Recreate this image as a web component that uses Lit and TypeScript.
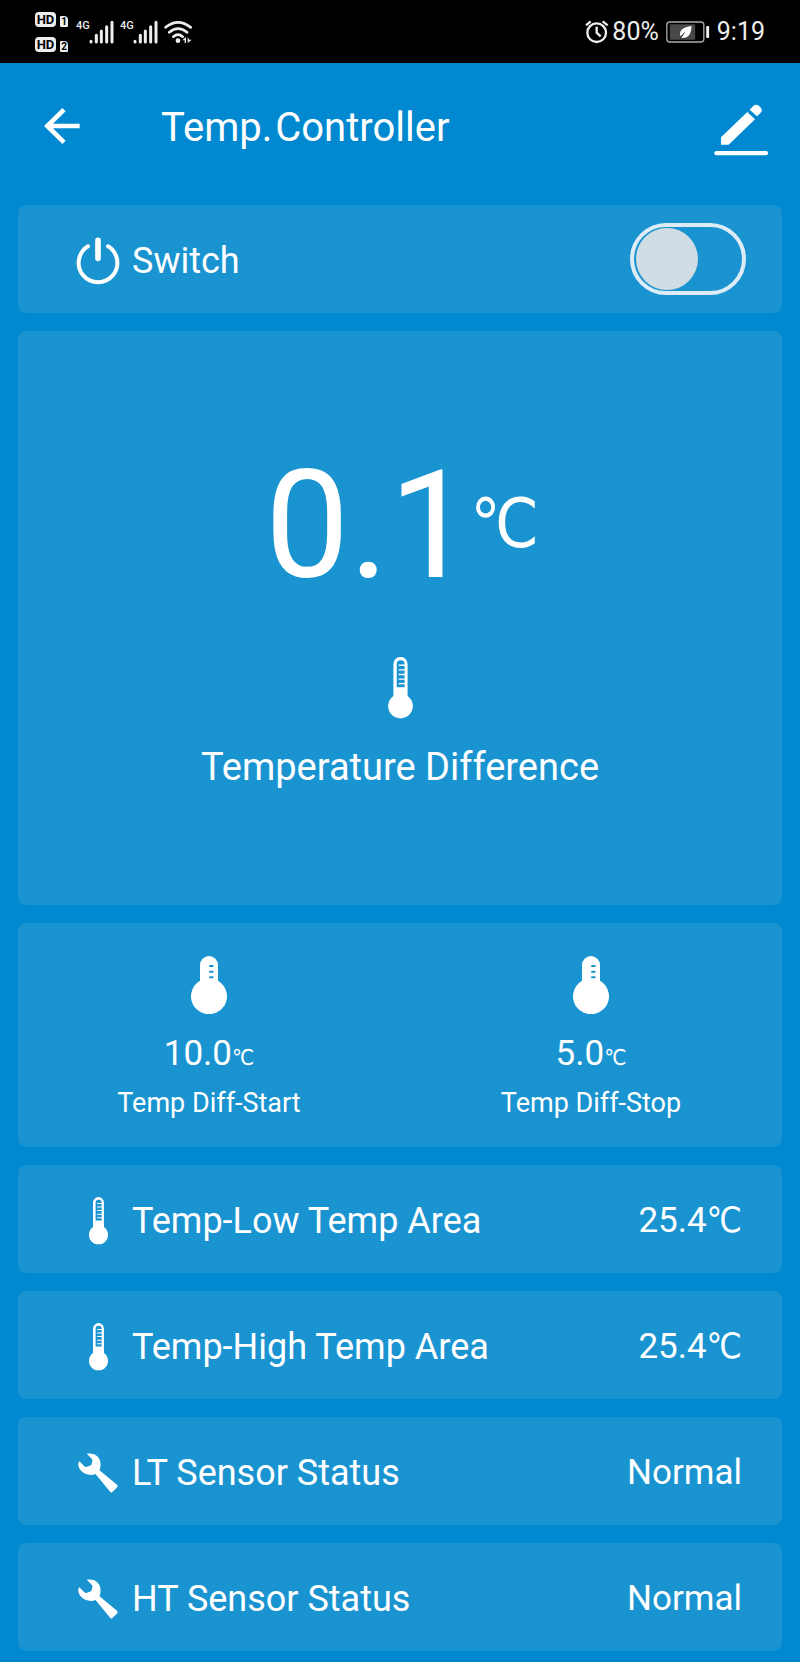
import { LitElement, html, css } from "lit";
import { customElement, property, state } from "lit/decorators.js";

const slimThermometer = html`<svg class="slim" viewBox="595 51 75 188" aria-hidden="true">
  <path fill="currentColor" fill-rule="evenodd" d="M611 72a21.500 21.500 0 0 1 43 0v97a37.500 37.500 0 1 1-43 0zM621 143h24V73a12 12 0 0 0-24 0z"/>
  <path stroke="currentColor" stroke-width="4" d="M627 76h20M627 90h20M627 104h20M627 118h20M627 132h20"/>
</svg>`;

const roundThermometer = html`<svg class="round" viewBox="275 48 108 174" aria-hidden="true">
  <path fill="currentColor" d="M302 75a27 27 0 0 1 54 0v47a54 54 0 1 1-54 0z"/>
  <path class="ticks" stroke-width="6" stroke-linecap="round" d="M332 78h8M332 95h8M332 112h8"/>
</svg>`;

const wrench = html`<svg class="wrench" viewBox="236 126 119 118" aria-hidden="true">
  <path fill="currentColor" d="M262 128C286 123 304 139 303 160Q303 170 300 177L352 220Q356 224 352 228L339 241Q335 245 331 240L288 188C262 198 234 178 237 155L240 150L255 165Q259 168 265 166L273 163Q277 161 277 156L279 149Q279 145 276 142Z"/>
</svg>`;

const power = html`<svg class="power" viewBox="230 528 130 144" aria-hidden="true">
  <g fill="none" stroke="currentColor" stroke-linecap="round">
    <path stroke-width="12" d="M265 556A58 58 0 1 0 325 556"/>
    <path stroke-width="17" d="M295 538V592"/>
  </g>
</svg>`;

const icons = { thermometer: slimThermometer, wrench };

@customElement("status-bar")
export class StatusBar extends LitElement {
  static styles = css`
    :host {
      display: flex;
      justify-content: space-between;
      align-items: center;
      height: 63px;
      box-sizing: border-box;
      padding: 1px 35px 0 35px;
      background: #000;
      color: #eee;
      font-size: 25px;
      line-height: 28px;
    }
    svg { display: block; flex: none; }
    .left, .right { display: flex; align-items: center; }
    .lines { display: grid; gap: 10px; margin-right: 8px; }
    .hd { display: flex; gap: 4px; align-items: flex-end; }
    .badge, .sim {
      background: #eee;
      color: #000;
      font-weight: 700;
      text-align: center;
    }
    .badge { width: 21px; height: 15px; border-radius: 4px; font-size: 13px; line-height: 15px; }
    .sim { width: 8px; height: 11px; border-radius: 1px 4px 1px 1px; font-size: 10px; line-height: 11px; }
    .cell { display: flex; align-items: flex-start; width: 38px; margin-right: 6px; }
    .net { width: 13px; font-size: 11px; line-height: 12px; font-weight: 500; }
    .bars { width: 25px; height: 24px; }
    .wifi { width: 29px; height: 24px; }
    .alarm { width: 24px; height: 24px; margin-right: 3px; }
    .battery { width: 44px; height: 22px; margin: 0 7px; }
  `;

  private cell() {
    return html`<div class="cell">
      <span class="net">4G</span>
      <svg class="bars" viewBox="205 57 75 72" aria-hidden="true">
        <path stroke="currentColor" stroke-width="9" stroke-linecap="round" d="M211 121v2M227 103v20M242 90v33M258 77v46M274 64v59"/>
      </svg>
    </div>`;
  }

  render() {
    return html`
      <div class="left">
        <div class="lines">
          <div class="hd"><span class="badge">HD</span><span class="sim">1</span></div>
          <div class="hd"><span class="badge">HD</span><span class="sim">2</span></div>
        </div>
        ${this.cell()}${this.cell()}
        <svg class="wifi" viewBox="433 57 87 72" aria-hidden="true">
          <g fill="none" stroke="currentColor" stroke-width="8" stroke-linecap="round">
            <path d="M438 79Q475 49 513 79M449 94Q475 72 502 94M461 107Q475 95 489 107"/>
          </g>
          <circle cx="475" cy="119" r="7" fill="currentColor"/>
          <path fill="currentColor" d="M488 118l11-10v18h-4v-8zM504 108v18l12-10h-7z"/>
        </svg>
      </div>
      <div class="right">
        <svg class="alarm" viewBox="50 58 72 72" aria-hidden="true">
          <g fill="none" stroke="currentColor" stroke-width="7">
            <circle cx="85" cy="96" r="28"/>
            <path d="M53 74l14-12M103 62l15 12M85 78v18l12 11"/>
          </g>
        </svg>
        <span>80%</span>
        <svg class="battery" viewBox="291 62 131 66" aria-hidden="true">
          <rect x="293" y="65" width="111" height="60" rx="9" fill="none" stroke="#aaa" stroke-width="4"/>
          <rect x="302" y="72" width="76" height="46" rx="2" fill="#484848"/>
          <rect x="411" y="77" width="9" height="36" rx="3" fill="currentColor"/>
          <path fill="#fff" d="M367 77C342 80 328 90 334 108L350 92L337 113C357 115 367 100 367 77Z"/>
        </svg>
        <span>9:19</span>
      </div>`;
  }
}

@customElement("info-row")
export class InfoRow extends LitElement {
  static styles = css`
    :host {
      display: flex;
      align-items: center;
      gap: 12px;
      box-sizing: border-box;
      min-height: 108px;
      padding: 3px 40px 0 58px;
      border-radius: 8px;
      background: var(--card);
      font-size: 36px;
      line-height: 42px;
    }
    .icon { display: grid; place-items: center; width: 44px; flex: none; }
    .name { flex: 1; }
    .value { font-size: 35px; }
    svg { display: block; }
    .slim { width: 19px; height: 48px; }
    .wrench { width: 40px; height: 40px; }
  `;

  @property() icon: keyof typeof icons = "thermometer";
  @property() name = "";
  @property() value = "";

  render() {
    return html`
      <span class="icon">${icons[this.icon]}</span>
      <span class="name">${this.name}</span>
      <span class="value">${this.value}</span>`;
  }
}

@customElement("app-root")
export class AppRoot extends LitElement {
  static styles = css`
    :host {
      --page: #0089d0;
      --card: #1a94d1;
      display: block;
      box-sizing: border-box;
      min-height: 100vh;
      background: var(--page);
      color: #fff;
      font-family: Roboto, "DejaVu Sans Condensed", sans-serif;
    }
    svg { display: block; }
    header {
      display: flex;
      align-items: center;
      height: 130px;
      padding: 0 32px 0 44px;
    }
    button {
      flex: none;
      padding: 0;
      border: 0;
      background: none;
      color: inherit;
      cursor: pointer;
    }
    .back { width: 36px; padding-bottom: 5px; }
    .edit { width: 54px; padding-top: 4px; }
    h1 {
      display: flex;
      gap: 3px;
      flex: 1;
      margin: 0 0 0 81px;
      font-size: 40px;
      line-height: 48px;
      font-weight: 400;
    }
    main {
      display: grid;
      gap: 18px;
      padding: 12px 18px 11px;
    }
    .card { border-radius: 8px; background: var(--card); }
    .switch {
      display: flex;
      align-items: center;
      gap: 12px;
      min-height: 108px;
      padding: 0 36px 0 58px;
      font-size: 36px;
      line-height: 42px;
    }
    .switch label { flex: 1; padding-top: 3px; }
    .power { width: 44px; height: 48px; padding-top: 3px; }
    .toggle {
      appearance: none;
      display: flex;
      align-items: center;
      box-sizing: border-box;
      width: 116px;
      height: 72px;
      margin: 0;
      padding: 0 2px;
      border: 4px solid #dcebf5;
      border-radius: 36px;
      background: transparent;
      cursor: pointer;
    }
    .toggle::before {
      content: "";
      width: 62px;
      height: 62px;
      border-radius: 50%;
      background: #d0dde4;
    }
    .toggle:checked { justify-content: flex-end; }
    .main-reading {
      display: flex;
      flex-direction: column;
      align-items: center;
      padding: 119px 16px 116px;
    }
    .big {
      display: flex;
      align-items: center;
      padding-left: 4px;
      font-size: 150px;
      line-height: 152px;
    }
    .big .unit { margin: 0 0 4px -3px; font-size: 68px; line-height: 84px; }
    .main-reading .slim { width: 25px; height: 62px; margin: 55px 0 26px; }
    .caption { font-size: 38px; line-height: 44px; }
    .pair {
      display: grid;
      grid-template-columns: 1fr 1fr;
      padding: 33px 0 29px;
    }
    .setting { display: flex; flex-direction: column; align-items: center; }
    .round { width: 36px; height: 58px; }
    .ticks { stroke: var(--card); }
    .amount { margin: 19px 0 13px; font-size: 35px; line-height: 42px; }
    .amount .unit { font-size: 22px; line-height: 24px; }
    .setting .label { font-size: 27px; line-height: 30px; }
  `;

  @state() private on = false;

  private setting(amount: string, label: string) {
    return html`<div class="setting">
      ${roundThermometer}
      <div class="amount">${amount}<span class="unit">℃</span></div>
      <div class="label">${label}</div>
    </div>`;
  }

  render() {
    return html`
      <status-bar></status-bar>
      <header>
        <button class="back" aria-label="Back">
          <svg width="36" height="36" viewBox="133 142 108 108" aria-hidden="true">
            <path fill="none" stroke="currentColor" stroke-width="14" d="M240 196H143M193 147L143 196L193 245"/>
          </svg>
        </button>
        <h1><span>Temp.</span><span>Controller</span></h1>
        <button class="edit" aria-label="Edit">
          <svg width="54" height="52" viewBox="342 73 162 156" aria-hidden="true">
            <g fill="currentColor">
              <path d="M442 97L465 119L386 195H363V173Z"/>
              <path d="M449 90L460 79Q468 72 477 79L481 83Q489 92 482 99L471 110Z"/>
              <rect x="343" y="214" width="161" height="13" rx="6"/>
            </g>
          </svg>
        </button>
      </header>
      <main>
        <section class="card switch">
          ${power}
          <label for="power">Switch</label>
          <input id="power" class="toggle" type="checkbox" role="switch"
            .checked=${this.on}
            @change=${(e: Event) => { this.on = (e.target as HTMLInputElement).checked; }}>
        </section>
        <section class="card main-reading">
          <div class="big"><span>0.1</span><span class="unit">℃</span></div>
          ${slimThermometer}
          <div class="caption">Temperature Difference</div>
        </section>
        <section class="card pair">
          ${this.setting("10.0", "Temp Diff-Start")}
          ${this.setting("5.0", "Temp Diff-Stop")}
        </section>
        <info-row icon="thermometer" name="Temp-Low Temp Area" value="25.4℃"></info-row>
        <info-row icon="thermometer" name="Temp-High Temp Area" value="25.4℃"></info-row>
        <info-row icon="wrench" name="LT Sensor Status" value="Normal"></info-row>
        <info-row icon="wrench" name="HT Sensor Status" value="Normal"></info-row>
      </main>`;
  }
}
